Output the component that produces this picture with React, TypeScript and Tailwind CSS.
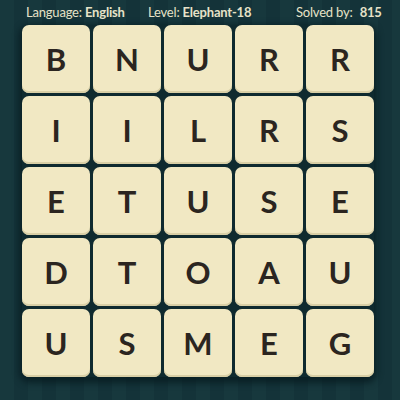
const GRID = ["BNURR", "IILRS", "ETUSE", "DTOAU", "USMEG"];

export default function App() {
  return (
    <div className="w-[400px] h-[400px] overflow-hidden bg-[repeating-linear-gradient(90deg,#17383d_0px,#17383d_14px,#143339_14px,#143339_28px)] font-['Lato',sans-serif]">
      {/* Header */}
      <div className="h-[25px] flex items-center pl-[26px] text-[13px] tracking-[-0.2px] text-[#e6e2c8]">
        <span className="w-[122px]">
          Language: <b className="font-bold">English</b>
        </span>
        <span className="w-[148px]">
          Level: <b className="font-bold">Elephant-18</b>
        </span>
        <span>
          Solved by: <b className="font-bold ml-1">815</b>
        </span>
      </div>

      {/* Board */}
      <div className="ml-[22px] w-fit grid grid-cols-5 gap-[3px] bg-[#0f2a2f] rounded-[8px] shadow-[0_3px_6px_3px_rgba(8,28,32,0.8)]">
        {GRID.join("").split("").map((ch, i) => (
          <div
            key={i}
            className="w-[68px] h-[68px] rounded-[7px] bg-[#f1e8c3] shadow-[inset_0_-2px_0_#d9cfa6] flex items-center justify-center text-[31px] font-bold text-[#2b2520]"
          >
            {ch}
          </div>
        ))}
      </div>
    </div>
  );
}
